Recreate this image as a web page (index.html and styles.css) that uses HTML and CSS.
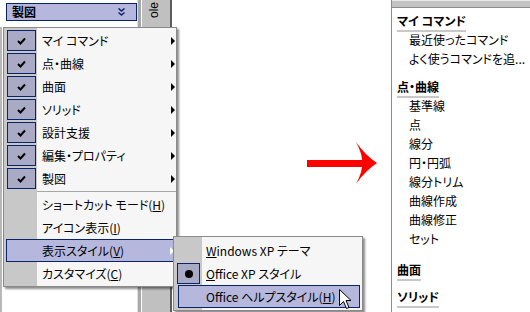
FILE: index.html
```html
<!DOCTYPE html>
<html lang="ja">
<head>
  <meta charset="UTF-8" />
  <title>メニュー表示スタイル</title>
  <link rel="stylesheet" href="styles.css">
</head>
<body>
  <div class="screen">
    <div class="left-pane">
      <div class="toolbar">
        <div class="dropdown">
          <span class="dropdown-text">製図</span>
          <svg class="chevron" width="7" height="8" viewBox="0 0 7 8">
            <polyline points="0.5,0.5 3.5,3 6.5,0.5" />
            <polyline points="0.5,4.5 3.5,7 6.5,4.5" />
          </svg>
        </div>
      </div>
      <div class="left-body"></div>
    </div>
    <div class="splitter"></div>
    <div class="tab-strip"><span class="tab-label">ole</span></div>

    <div class="stage">
      <svg class="big-arrow" width="70" height="44" viewBox="0 0 70 44">
        <rect x="0" y="19" width="56" height="7" />
        <path d="M49,1 Q58,14 70,22 Q58,30 49,43 Q56,30 55,22 Q56,14 49,1 Z" />
      </svg>
    </div>

    <aside class="help-pane">
      <div class="pane-top"></div>
      <section class="cmd-group first">
        <h2>マイ コマンド</h2>
        <ul>
          <li>最近使ったコマンド</li>
          <li>よく使うコマンドを追...</li>
        </ul>
      </section>
      <section class="cmd-group">
        <h2>点・曲線</h2>
        <ul>
          <li>基準線</li>
          <li>点</li>
          <li>線分</li>
          <li>円・円弧</li>
          <li>線分トリム</li>
          <li>曲線作成</li>
          <li>曲線修正</li>
          <li>セット</li>
        </ul>
      </section>
      <section class="cmd-group spaced">
        <h2>曲面</h2>
      </section>
      <section class="cmd-group tight">
        <h2>ソリッド</h2>
      </section>
    </aside>

    <!-- popup menus drawn over the panes -->
    <div class="menu main-menu">
      <div class="menu-item"><span class="menu-icon"><span class="check-box"><svg width="9" height="8" viewBox="0 0 9 8"><path d="M1,4 L3.5,6.5 L8,1.5" /></svg></span></span><span class="menu-label">マイ コマンド</span><span class="sub-arrow"></span></div>
      <div class="menu-item"><span class="menu-icon"><span class="check-box"><svg width="9" height="8" viewBox="0 0 9 8"><path d="M1,4 L3.5,6.5 L8,1.5" /></svg></span></span><span class="menu-label">点・曲線</span><span class="sub-arrow"></span></div>
      <div class="menu-item"><span class="menu-icon"><span class="check-box"><svg width="9" height="8" viewBox="0 0 9 8"><path d="M1,4 L3.5,6.5 L8,1.5" /></svg></span></span><span class="menu-label">曲面</span><span class="sub-arrow"></span></div>
      <div class="menu-item"><span class="menu-icon"><span class="check-box"><svg width="9" height="8" viewBox="0 0 9 8"><path d="M1,4 L3.5,6.5 L8,1.5" /></svg></span></span><span class="menu-label">ソリッド</span><span class="sub-arrow"></span></div>
      <div class="menu-item"><span class="menu-icon"><span class="check-box"><svg width="9" height="8" viewBox="0 0 9 8"><path d="M1,4 L3.5,6.5 L8,1.5" /></svg></span></span><span class="menu-label">設計支援</span><span class="sub-arrow"></span></div>
      <div class="menu-item"><span class="menu-icon"><span class="check-box"><svg width="9" height="8" viewBox="0 0 9 8"><path d="M1,4 L3.5,6.5 L8,1.5" /></svg></span></span><span class="menu-label">編集・プロパティ</span><span class="sub-arrow"></span></div>
      <div class="menu-item"><span class="menu-icon"><span class="check-box"><svg width="9" height="8" viewBox="0 0 9 8"><path d="M1,4 L3.5,6.5 L8,1.5" /></svg></span></span><span class="menu-label">製図</span><span class="sub-arrow"></span></div>
      <div class="menu-sep"></div>
      <div class="menu-item"><span class="menu-icon"></span><span class="menu-label">ショートカット モード(<u>H</u>)</span></div>
      <div class="menu-item"><span class="menu-icon"></span><span class="menu-label">アイコン表示(<u>I</u>)</span></div>
      <div class="menu-item hot"><span class="menu-icon"></span><span class="menu-label">表示スタイル(<u>V</u>)</span><span class="sub-arrow"></span></div>
      <div class="menu-item"><span class="menu-icon"></span><span class="menu-label">カスタマイズ(<u>C</u>)</span></div>
    </div>

    <div class="menu sub-menu">
      <div class="menu-item"><span class="menu-icon"></span><span class="menu-label"><u>W</u>indows XP テーマ</span></div>
      <div class="menu-item"><span class="menu-icon"><span class="radio-box"><span class="dot"></span></span></span><span class="menu-label"><u>O</u>ffice XP スタイル</span></div>
      <div class="menu-item hot"><span class="menu-icon"></span><span class="menu-label">Office ヘルプスタイル(<u>H</u>)</span></div>
    </div>

    <svg class="cursor" width="13" height="21" viewBox="0 0 13 21">
      <path d="M0.5,0.5 L0.5,16.5 L4.5,12.5 L7.5,19.5 L10,18.5 L7,11.5 L12,11.5 Z" />
    </svg>
  </div>
</body>
</html>
```

FILE: styles.css
```css
body {
  margin: 0;
  background: #fff;
  color: #000;
  font-family: "Noto Sans CJK JP", "Noto Sans", sans-serif;
  font-size: 12px;
  line-height: 16px;
  font-feature-settings: "palt";
}

.screen {
  position: relative;
  width: 530px;
  height: 312px;
  overflow: hidden;
  display: grid;
  grid-template-columns: 137px 5px 30px 1fr 139px;
}

/* left pane */
.left-pane {
  display: flex;
  flex-direction: column;
}

.toolbar {
  height: 27px;
  padding: 3px 0 0 6px;
  box-sizing: border-box;
}

.dropdown {
  height: 18px;
  box-sizing: border-box;
  border: 1px solid #0a246a;
  background: #b6b7dc;
  display: flex;
  align-items: center;
  padding: 0 11px 0 5px;
}

.dropdown-text {
  font-weight: bold;
}

.chevron {
  margin-left: auto;
  fill: none;
  stroke: #0a246a;
  stroke-width: 1.5;
}

.left-body {
  flex: 1;
  border-left: 2px solid #b8b8b8;
}

.splitter {
  box-sizing: border-box;
  border-left: 1px solid #e0e0e0;
  border-right: 1px solid #fff;
  background: #a8a8a8;
}

.tab-strip {
  background: #c0c0c0;
  border-right: 2px solid #5c5c5c;
  padding: 2px 0 0 6px;
}

.tab-label {
  display: inline-block;
  writing-mode: vertical-rl;
  transform: rotate(180deg);
  font-family: "Liberation Sans", Arial, sans-serif;
  font-size: 12px;
  line-height: 12px;
}

/* middle */
.stage {
  padding: 141px 0 0 135px;
}

.big-arrow {
  display: block;
  fill: #ff0000;
}

/* right help pane */
.help-pane {
  border-left: 1px solid #8c8c8c;
  overflow: hidden;
  white-space: nowrap;
}

.pane-top {
  height: 6px;
  background: #c4c4c4;
  border-top: 1px solid #e8e8e8;
  border-bottom: 1px solid #8c8c8c;
}

.cmd-group {
  padding-left: 5px;
  margin-top: 11px;
}

.cmd-group.first {
  margin-top: 5px;
}

.cmd-group.spaced {
  margin-top: 14px;
}

.cmd-group.tight {
  margin-top: 8px;
}

.cmd-group h2 {
  width: max-content;
  margin: 0;
  font-size: 12px;
  font-weight: bold;
  line-height: 16px;
  padding-bottom: 1px;
  border-bottom: 2px solid #c8c8c8;
}

.cmd-group ul {
  list-style: none;
  margin: -2px 0 0;
  padding-left: 12px;
}

.cmd-group li {
  line-height: 19px;
}

/* popup menus */
.menu {
  position: absolute;
  box-sizing: border-box;
  border: 1px solid #8a8a8a;
  padding: 1px 0;
  background: linear-gradient(to right, #c8c8c8 33px, #f6f6f6 33px);
  box-shadow: 2px 2px 2px rgba(0, 0, 0, 0.45);
}

.main-menu {
  left: 3px;
  top: 27px;
  width: 174px;
}

.menu-item {
  display: flex;
  align-items: center;
  height: 23px;
  box-sizing: border-box;
}

.menu-icon {
  width: 33px;
  flex: none;
  display: flex;
  align-items: center;
}

.check-box {
  margin-left: 3px;
  width: 29px;
  height: 21px;
  box-sizing: border-box;
  border: 1px solid #0a246a;
  background: #a9aac6;
  display: flex;
  align-items: center;
  justify-content: center;
}

.check-box svg {
  fill: none;
  stroke: #000;
  stroke-width: 2;
}

.menu-label {
  padding-left: 5px;
  white-space: nowrap;
}

.sub-arrow {
  margin-left: auto;
  margin-right: 1px;
  border-left: 4px solid #000;
  border-top: 4px solid transparent;
  border-bottom: 4px solid transparent;
}

.menu-item.hot {
  margin: 0 1px 0 2px;
  border: 1px solid #0a246a;
  background: #b6b7dc;
}

.menu-item.hot .menu-icon {
  width: 30px;
}

.menu-item.hot .sub-arrow {
  margin-right: 0;
  border-left-color: #fff;
}

.menu-sep {
  height: 3px;
  margin-left: 33px;
  background: linear-gradient(#a6a6a6, #a6a6a6) center / 100% 1px no-repeat;
}

.sub-menu {
  left: 173px;
  top: 236px;
  width: 190px;
  padding: 2px 0;
  background: linear-gradient(to right, #c8c8c8 28px, #f6f6f6 28px);
}

.sub-menu .menu-icon {
  width: 28px;
}

.sub-menu .menu-label {
  padding-left: 4px;
}

.sub-menu .menu-item.hot {
  margin: 0 2px 0 4px;
}

.sub-menu .menu-item.hot .menu-icon {
  width: 23px;
}

.radio-box {
  margin-left: 3px;
  width: 23px;
  height: 21px;
  box-sizing: border-box;
  border: 1px solid #0a246a;
  background: #a9aac6;
  display: flex;
  align-items: center;
  justify-content: center;
}

.dot {
  width: 8px;
  height: 8px;
  border-radius: 50%;
  background: #000;
}

.cursor {
  position: absolute;
  left: 339px;
  top: 289px;
  fill: #fff;
  stroke: #000;
  stroke-width: 1;
}
```
